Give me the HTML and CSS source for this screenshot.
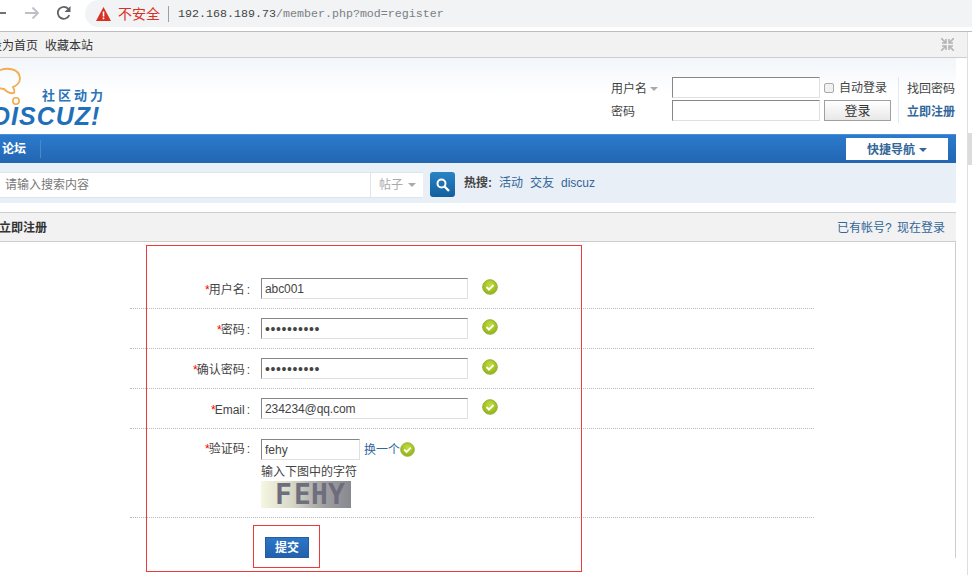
FILE: index.html
```html
<!DOCTYPE html>
<html lang="zh">
<head>
<meta charset="utf-8">
<title>立即注册</title>
<link rel="stylesheet" href="styles.css">
</head>
<body>
<header class="chrome">
  <svg class="tool tool-back" width="8" height="16" viewBox="0 0 8 16"><path d="M0 8h6" stroke="#5f6368" stroke-width="1.8" fill="none"/></svg>
  <svg class="tool tool-fwd" width="16" height="16" viewBox="0 0 16 16"><path d="M1 8h13M8.500 2.500 14 8l-5.500 5.500" stroke="#bdc1c6" stroke-width="1.8" fill="none"/></svg>
  <svg class="tool tool-reload" width="16" height="16" viewBox="0 0 16 16"><path d="M13.300 10.200A6 6 0 1 1 12.300 3.800" stroke="#5f6368" stroke-width="1.800" fill="none"/><path d="M14.500 1v6h-6z" fill="#5f6368"/></svg>
  <div class="omnibox">
    <svg class="warn" width="15" height="14" viewBox="0 0 15 14"><path d="M7.500 0 15 14H0z" fill="#d93025"/><path d="M6.700 4.500h1.600v5H6.700zM6.700 10.500h1.600v1.700H6.700z" fill="#fff"/></svg>
    <span class="insecure">不安全</span>
    <span class="omni-sep"></span>
    <span class="url"><span class="host">192.168.189.73</span>/member.php?mod=register</span>
  </div>
</header>

<div class="page">
  <div class="topbar">
    <div class="toplinks"><a>设为首页</a><a>收藏本站</a></div>
    <svg class="shrink" width="13" height="13" viewBox="0 0 13 13"><path d="M0 0 5 5M5 1v4H1M13 0 8 5M8 1v4h4M0 13l5-5M5 12V8H1M13 13 8 8M8 12V8h4" stroke="#b4b4b4" stroke-width="1.600" fill="none"/></svg>
  </div>

  <div class="head">
    <div class="logo">
      <svg class="bubble" width="24" height="42" viewBox="0 0 24 42"><path d="M-2 3C6-1 19 0 20 10c0 5-4 8-7 9 1 2 2 4 1 6-4 1-8-2-10-4-3 0-5-1-6-2" fill="none" stroke="#f3ac50" stroke-width="1.800"/><circle cx="16" cy="33" r="3.200" fill="none" stroke="#f3ac50" stroke-width="1.600"/></svg>
      <span class="slogan">社区动力</span>
      <span class="wordmark">Discuz!</span>
    </div>
    <div class="login">
      <div class="login-labels">
        <span class="login-label">用户名<i class="caret caret-grey"></i></span>
        <span class="login-label">密码</span>
      </div>
      <div class="login-fields">
        <span class="field field-login"></span>
        <span class="field field-login"></span>
      </div>
      <div class="login-actions">
        <label class="auto"><span class="checkbox"></span>自动登录</label>
        <span class="btn-login">登录</span>
      </div>
      <div class="login-links">
        <a>找回密码</a>
        <a class="link-reg">立即注册</a>
      </div>
    </div>
  </div>

  <nav class="nav">
    <a class="nav-item">论坛</a>
    <a class="quick">快捷导航<i class="caret caret-blue"></i></a>
  </nav>

  <div class="search">
    <div class="search-box">
      <span class="search-input">请输入搜索内容</span>
      <span class="search-type">帖子<i class="caret caret-grey"></i></span>
    </div>
    <span class="search-btn">
      <svg width="14" height="14" viewBox="0 0 14 14"><circle cx="5.500" cy="5.500" r="4" fill="none" stroke="#fff" stroke-width="2"/><path d="m8.500 8.500 4.500 4.500" stroke="#fff" stroke-width="2.400"/></svg>
    </span>
    <div class="hot"><strong>热搜:</strong><a>活动</a><a>交友</a><a>discuz</a></div>
  </div>

  <section class="panel">
    <div class="panel-head">
      <h2>立即注册</h2>
      <a class="to-login">已有帐号? 现在登录</a>
    </div>
    <form class="reg">
      <div class="row">
        <label><em>*</em>用户名<span class="colon">:</span></label>
        <span class="field field-reg">abc001</span>
        <svg class="ok" viewBox="0 0 16 16"><use href="#okicon"/></svg>
      </div>
      <div class="row">
        <label><em>*</em>密码<span class="colon">:</span></label>
        <span class="field field-reg dots">••••••••••</span>
        <svg class="ok" viewBox="0 0 16 16"><use href="#okicon"/></svg>
      </div>
      <div class="row">
        <label><em>*</em>确认密码<span class="colon">:</span></label>
        <span class="field field-reg dots">••••••••••</span>
        <svg class="ok" viewBox="0 0 16 16"><use href="#okicon"/></svg>
      </div>
      <div class="row">
        <label><em>*</em>Email<span class="colon">:</span></label>
        <span class="field field-reg">234234@qq.com</span>
        <svg class="ok" viewBox="0 0 16 16"><use href="#okicon"/></svg>
      </div>
      <div class="row row-captcha">
        <label><em>*</em>验证码<span class="colon">:</span></label>
        <div class="captcha">
          <div class="captcha-line">
            <span class="field field-code">fehy</span>
            <a class="change">换一个</a>
            <svg class="ok ok-inline" viewBox="0 0 16 16"><use href="#okicon"/></svg>
          </div>
          <div class="hint">输入下图中的字符</div>
          <div class="captcha-img"><span>F</span><span>E</span><span>H</span><span class="faint">Y</span></div>
        </div>
      </div>
      <div class="actions"><span class="submit">提交</span></div>
    </form>
  </section>

  <div class="mark mark-form"></div>
  <div class="mark mark-submit"></div>
</div>

<div class="scrollbar"><span class="thumb"></span></div>

<svg class="defs" width="0" height="0">
  <defs>
    <radialGradient id="okfill" cx="50%" cy="35%" r="65%"><stop offset="0" stop-color="#c3dc3a"/><stop offset="1" stop-color="#8fb414"/></radialGradient>
    <symbol id="okicon" viewBox="0 0 16 16">
      <circle cx="8" cy="8" r="7.300" fill="url(#okfill)" stroke="#94b13c" stroke-width="1"/>
      <path d="m4.500 8 2.500 2.500 4.500-4.500" fill="none" stroke="#fff" stroke-width="2"/>
    </symbol>
  </defs>
</svg>
</body>
</html>
```
FILE: styles.css
```css
* { box-sizing: border-box; }
html, body { margin: 0; height: 100%; }
body {
  position: relative;
  width: 972px;
  height: 575px;
  overflow: hidden;
  background: #fff;
  color: #444;
  font: 12px/16px "Liberation Sans", "Noto Sans CJK SC", sans-serif;
}
a { color: inherit; text-decoration: none; }

/* browser chrome */
.chrome {
  display: flex;
  align-items: flex-start;
  height: 32px;
  background: #fff;
  border-bottom: 1px solid #bdbdbd;
}
.tool { flex: none; margin-top: 5px; }
.tool-back { margin-left: 0; }
.tool-fwd { margin-left: 16px; }
.tool-reload { margin-left: 16px; }
.omnibox {
  flex: 1;
  display: flex;
  align-items: center;
  height: 27px;
  margin-left: 13px;
  padding-left: 11px;
  background: #f1f3f4;
  border-radius: 14px 0 0 14px;
}
.warn { flex: none; }
.insecure { margin-left: 7px; color: #d93025; font-size: 14px; }
.omni-sep { width: 1px; height: 16px; margin: 0 9px 0 8px; background: #9aa0a6; }
.url { color: #7a7f85; font: 11.67px/16px "Liberation Mono", monospace; }
.host { color: #444; }

/* page, scrolled sideways by 10px */
.page { position: relative; width: 977px; margin-left: -10px; }
.topbar {
  display: flex;
  align-items: center;
  justify-content: space-between;
  height: 26px;
  padding: 1px 13px 0 0;
  background: #f2f2f2;
  border-bottom: 1px solid #cdcdcd;
  color: #333;
}
.toplinks { display: flex; gap: 7px; padding-top: 1px; }
.shrink { margin-top: -1px; }
.head {
  display: flex;
  justify-content: space-between;
  width: 966px;
  height: 76px;
  padding-right: 1px;
  background: linear-gradient(#f2f6fa, #fff 36px);
}
.logo { position: relative; width: 120px; }
.bubble { position: absolute; left: 10px; top: 10px; overflow: visible; }
.slogan {
  position: absolute;
  left: 52px;
  top: 31px;
  color: #2b74b9;
  font-size: 13px;
  font-weight: 700;
  line-height: 13px;
  letter-spacing: 3px;
  white-space: nowrap;
}
.wordmark {
  position: absolute;
  left: 2px;
  top: 47px;
  color: #1f6fb9;
  font: italic 700 25px/22px "Liberation Sans", sans-serif;
  letter-spacing: 1px;
  text-transform: uppercase;
}
.login { display: flex; padding-top: 19px; color: #444; }
.login-labels { display: flex; flex-direction: column; gap: 7px; width: 61px; }
.login-label { height: 16px; margin-top: 4px; }
.login-labels .login-label + .login-label { margin-top: 0; }
.login-fields { display: flex; flex-direction: column; gap: 2px; }
.field {
  display: block;
  background: #fff;
  border: 1px solid #e0e0e0;
  border-top-color: #868686;
  border-left-color: #868686;
}
.field-login { width: 148px; height: 21px; }
.login-actions {
  display: flex;
  flex-direction: column;
  gap: 2px;
  width: 74px;
  margin-left: 4px;
}
.auto { display: flex; align-items: center; height: 21px; gap: 5px; padding-top: 1px; }
.checkbox {
  width: 10px;
  height: 10px;
  background: #f1f1f1;
  border: 1px solid #a9a9a9;
  border-radius: 2px;
}
.btn-login {
  width: 67px;
  height: 21px;
  background: linear-gradient(#fff, #e8e8e8);
  border: 1px solid #a0a0a0;
  color: #333;
  font-size: 13px;
  line-height: 19px;
  text-align: center;
}
.login-links {
  display: flex;
  flex-direction: column;
  gap: 7px;
  height: 46px;
  padding: 4px 0 0 8px;
  border-left: 1px solid #e2e9f0;
}
.link-reg { color: #336699; font-weight: 700; }

.nav {
  display: flex;
  align-items: center;
  justify-content: space-between;
  width: 966px;
  height: 29px;
  padding-right: 8px;
  background: linear-gradient(#2b7acd, #2366b1);
  border-top: 1px solid #4a8fd8;
}
.nav-item {
  width: 51px;
  padding-left: 12px;
  border-right: 1px solid #4a88c9;
  color: #fff;
  font-weight: 700;
  line-height: 18px;
}
.quick {
  display: flex;
  align-items: center;
  justify-content: center;
  gap: 4px;
  width: 102px;
  height: 22px;
  padding-top: 1px;
  background: #fff;
  color: #369;
  font-weight: 700;
}
.caret {
  display: inline-block;
  width: 0;
  height: 0;
  border: 4px solid transparent;
  border-bottom: 0;
}
.caret-grey { margin-left: 3px; border-top-color: #aaa; vertical-align: 2px; }
.search-type .caret-grey { margin-left: 5px; }
.caret-blue { border-top-color: #369; }

.search {
  display: flex;
  align-items: center;
  width: 966px;
  height: 40px;
  margin-bottom: 9px;
  padding-top: 1px;
  background: #e8eff6;
}
.search-box {
  display: flex;
  width: 433px;
  height: 26px;
  margin-top: 2px;
  background: #fff;
  border-top: 1px solid #dbe5ee;
  border-bottom: 1px solid #dbe5ee;
}
.search-input { width: 380px; padding: 4px 0 0 15px; color: #777; }
.search-type {
  flex: 1;
  padding: 4px 0 0 8px;
  border-left: 1px solid #dfe5ea;
  color: #aaa;
}
.search-btn {
  display: flex;
  align-items: center;
  justify-content: center;
  width: 25px;
  height: 25px;
  margin: 2px 0 0 7px;
  background: linear-gradient(#2a83c4, #125f9e);
  border-radius: 3px;
}
.hot { display: flex; gap: 7px; margin: -1px 0 0 9px; color: #369; }
.hot strong { color: #444; }

.panel-head {
  display: flex;
  align-items: center;
  justify-content: space-between;
  width: 966px;
  height: 30px;
  padding: 1px 10px 0 0;
  background: #f2f2f2;
  border: 1px solid #cdcdcd;
  border-width: 1px 0;
}
.panel-head h2 { margin: 0 0 0 9px; color: #333; font-size: 12px; }
.to-login { color: #369; word-spacing: 2px; margin-right: 1px; }
.panel { width: 966px; border-right: 1px solid #cdcdcd; }
.reg { padding: 27px 0 0 140px; }
.row {
  display: flex;
  align-items: center;
  gap: 10px;
  width: 684px;
  height: 40px;
  border-bottom: 1px dotted #bbb;
}
.row label { width: 121px; padding-top: 2px; text-align: right; white-space: nowrap; }
.row em { color: #f00; font-style: normal; margin-right: -1px; }
.colon { margin: 0 1px 0 2px; }
.field-reg {
  width: 207px;
  height: 21px;
  padding: 1px 0 0 3px;
  line-height: 19px;
  letter-spacing: -0.08px;
}
.dots { font-size: 14px; letter-spacing: 0.6px; }
.ok { flex: none; width: 16px; height: 16px; margin: -4px 0 0 4px; }
.row-captcha {
  align-items: flex-start;
  height: 89px;
  padding: 10px 0 0;
}
.captcha-line { display: flex; align-items: center; }
.field-code { width: 99px; height: 21px; padding: 1px 0 0 3px; line-height: 19px; }
.change { margin-left: 4px; color: #369; }
.ok-inline { margin: 0; width: 15px; height: 15px; }
.hint { margin-top: 4px; color: #444; }
.captcha-img {
  display: flex;
  width: 90px;
  height: 27px;
  margin-top: 1px;
  padding-left: 14px;
  background: linear-gradient(90deg, #f5f7e2, #d7d7c6 35%, #a0a0a2 70%, #88888f);
  color: #6e6e7e;
  font: 700 28px/27px "DejaVu Sans Mono", monospace;
}
.captcha-img span { width: 17px; }
.captcha-img span:first-child { width: 19px; }
.captcha-img .faint { color: #6c6c7c; }
.actions { width: 684px; padding: 19px 0 0 135px; }
.submit {
  display: block;
  width: 44px;
  height: 21px;
  background: linear-gradient(#2b76c9, #2362ad);
  border: 1px solid #2a5c99;
  color: #fff;
  font-weight: 700;
  line-height: 20px;
  text-align: center;
}

/* red annotation frames drawn over the page */
.mark { position: absolute; border: 1px solid #f03a3a; pointer-events: none; }
.mark-form { left: 156px; top: 213px; width: 436px; height: 327px; }
.mark-submit { left: 263px; top: 493px; width: 67px; height: 43px; }

.scrollbar {
  position: absolute;
  right: 0;
  top: 32px;
  width: 5px;
  height: 543px;
  background: #fff;
  border-left: 1px solid #dedede;
}
.thumb { position: absolute; left: 0; top: 101px; width: 4px; height: 32px; background: #dcdcdc; }
.defs { position: absolute; }
```
